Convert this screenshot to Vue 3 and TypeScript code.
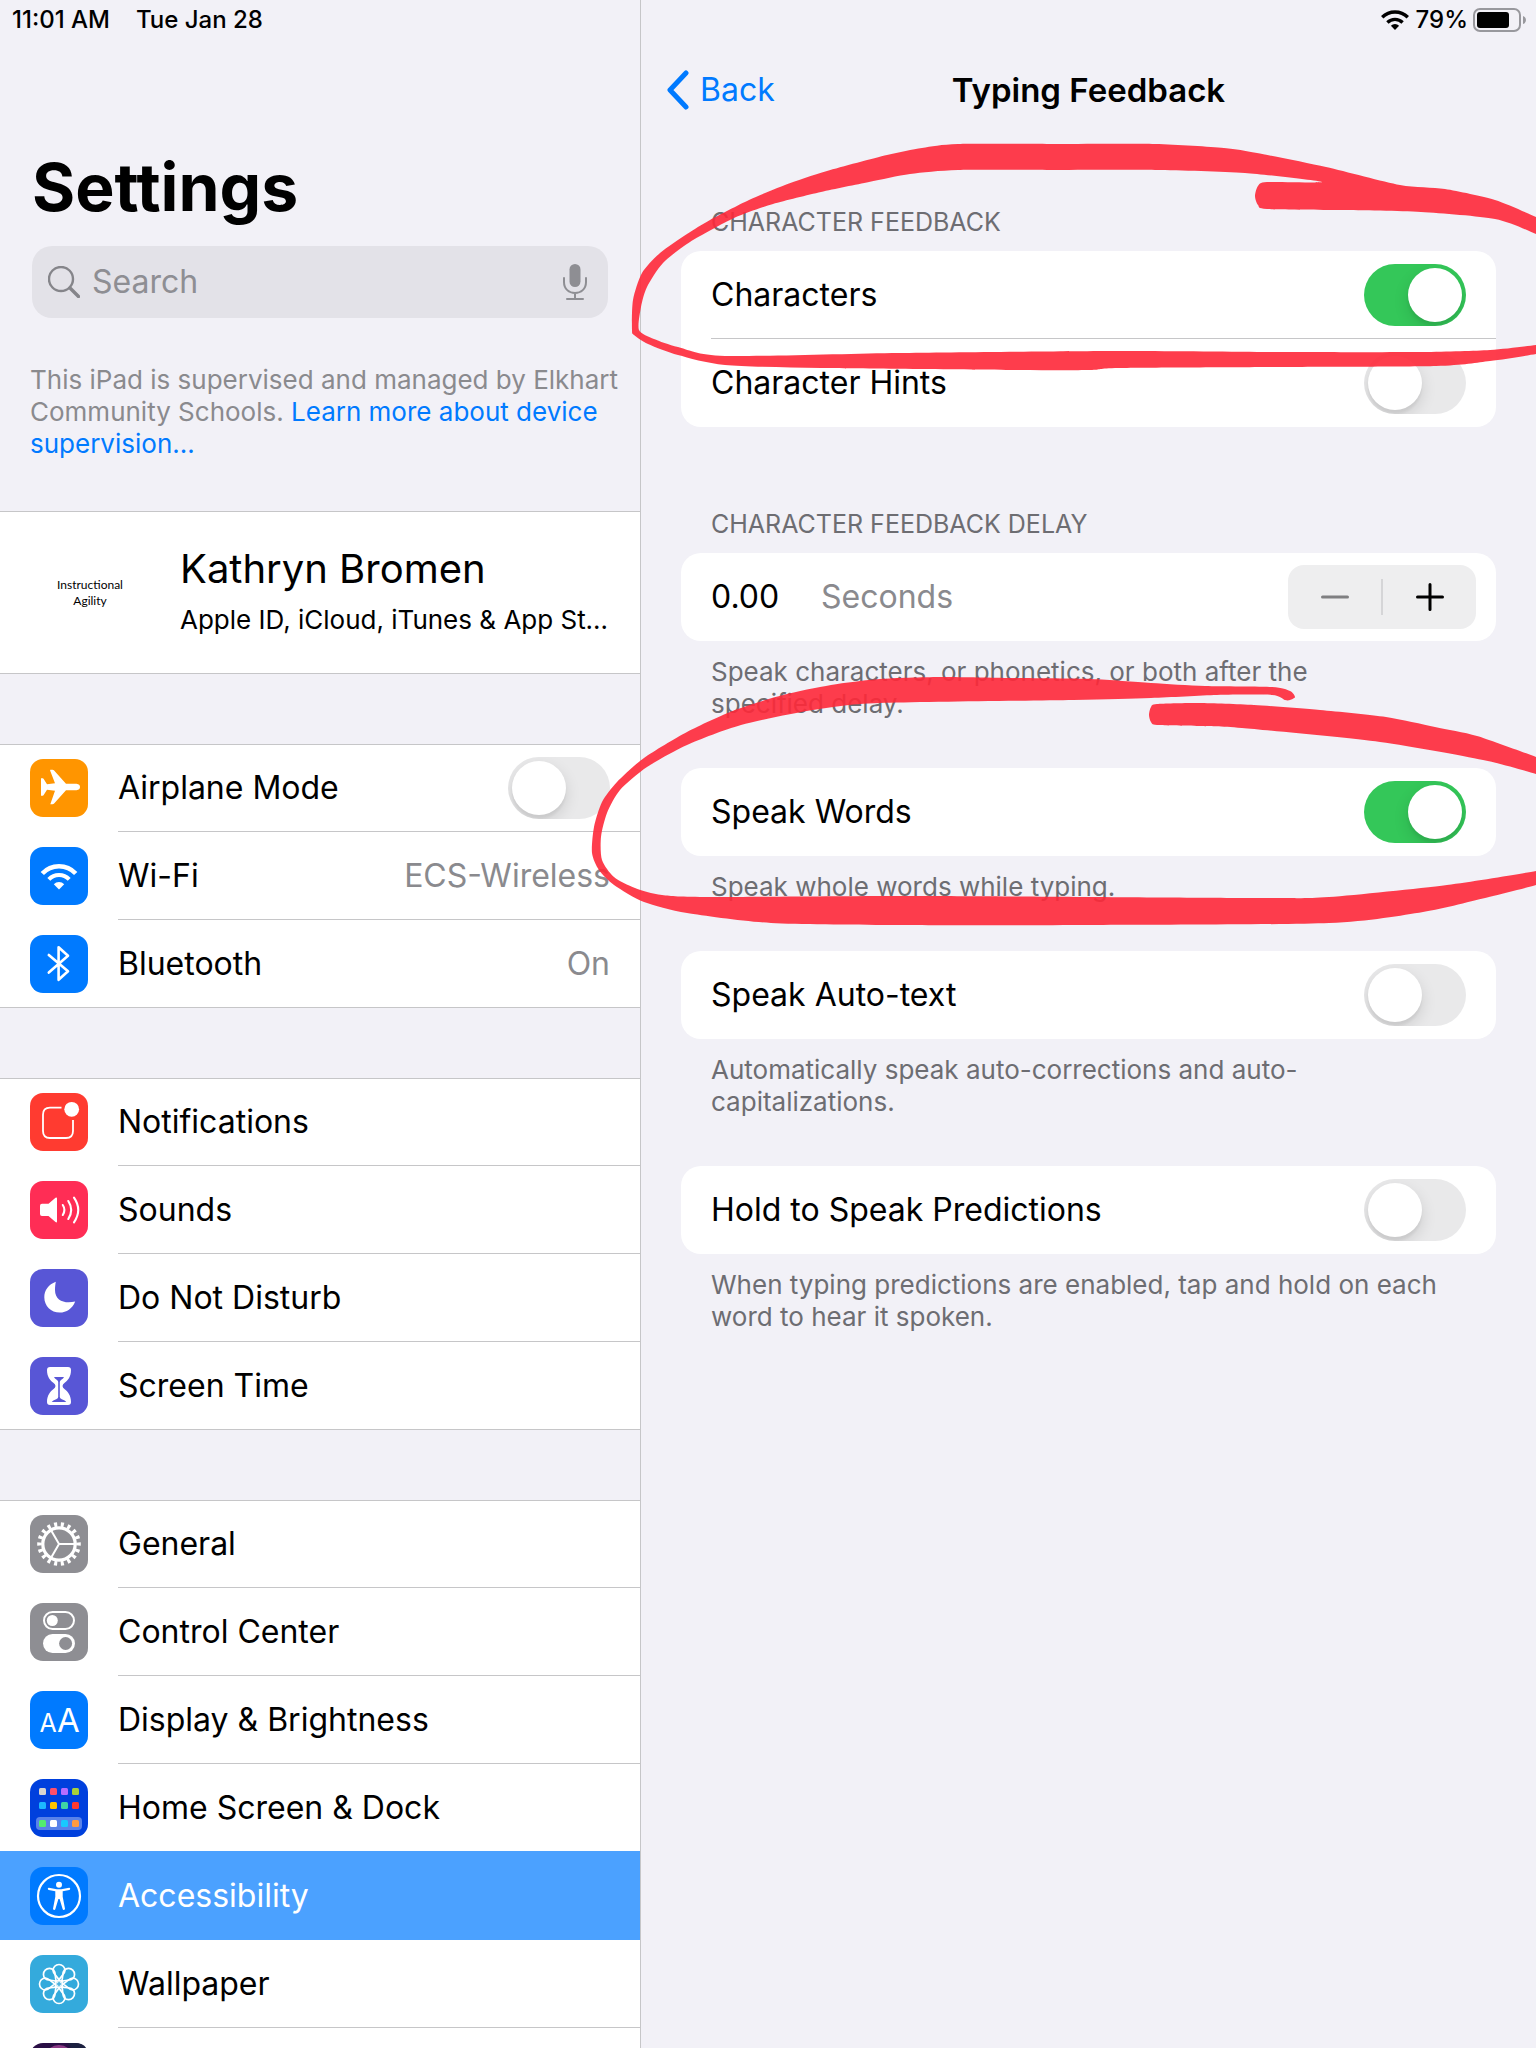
<script setup lang="ts">
import { reactive, ref, computed } from 'vue'

type IconName =
  | 'airplane' | 'wifi' | 'bluetooth' | 'notifications' | 'sounds' | 'moon' | 'hourglass'
  | 'gear' | 'control' | 'display' | 'home' | 'accessibility' | 'wallpaper' | 'siri'

interface Row {
  id: IconName
  label: string
  color: string
  value?: string
  toggle?: boolean
}

const groups: Row[][] = [
  [
    { id: 'airplane', label: 'Airplane Mode', color: '#ff9500', toggle: true },
    { id: 'wifi', label: 'Wi-Fi', color: '#007aff', value: 'ECS-Wireless' },
    { id: 'bluetooth', label: 'Bluetooth', color: '#007aff', value: 'On' },
  ],
  [
    { id: 'notifications', label: 'Notifications', color: '#ff3b30' },
    { id: 'sounds', label: 'Sounds', color: '#ff2d55' },
    { id: 'moon', label: 'Do Not Disturb', color: '#5856d6' },
    { id: 'hourglass', label: 'Screen Time', color: '#5856d6' },
  ],
  [
    { id: 'gear', label: 'General', color: '#8e8e93' },
    { id: 'control', label: 'Control Center', color: '#8e8e93' },
    { id: 'display', label: 'Display & Brightness', color: '#007aff' },
    { id: 'home', label: 'Home Screen & Dock', color: '#0040dd' },
    { id: 'accessibility', label: 'Accessibility', color: '#007aff' },
    { id: 'wallpaper', label: 'Wallpaper', color: '#34aadc' },
    { id: 'siri', label: '', color: '#2a0f45' },
  ],
]

const homeTiles = [
  { y: 9, colors: ['#d9d5cf', '#ff4f6b', '#b76dff', '#a9d13a'] },
  { y: 23, colors: ['#1cb8ff', '#ffc400', '#3fd5a5', '#ff3a30'] },
  { y: 41, colors: ['#53ee70', '#ffffff', '#18c9ff', '#ff9b40'] },
]

const selected = ref<IconName>('accessibility')
const airplane = ref(false)
const search = ref('')
const feedback = reactive({ characters: true, hints: false, words: true, autoText: false, hold: false })

const delay = ref('0.00')
const atMinimum = computed(() => Number(delay.value) <= 0)
function step(amount: number) {
  delay.value = Math.max(0, Number(delay.value) + amount).toFixed(2)
}

// Closed smooth outline through a flat list of x, y pairs.
function outline(flat: number[]): string {
  const n = flat.length / 2
  const at = (i: number) => {
    const k = ((i % n) + n) % n
    return [flat[k * 2], flat[k * 2 + 1]]
  }
  let d = `M${flat[0]} ${flat[1]}`
  for (let i = 0; i < n; i++) {
    const [a, b, c, e] = [at(i - 1), at(i), at(i + 1), at(i + 2)]
    d += `C${b[0] + (c[0] - a[0]) / 8} ${b[1] + (c[1] - a[1]) / 8} ${c[0] - (e[0] - b[0]) / 8} ${c[1] - (e[1] - b[1]) / 8} ${c[0]} ${c[1]}`
  }
  return d + 'Z'
}

const inkStrokes = [
  outline([
    958, 144, 1055, 144, 1155, 144, 1224, 148, 1257, 153, 1326, 167, 1400, 185, 1445, 189, 1495, 200, 1536, 217,
    1560, 228, 1560, 246, 1536, 234, 1495, 219, 1421, 212, 1340, 210, 1267, 209, 1258, 205, 1255, 196, 1258, 186,
    1267, 182, 1322, 182, 1245, 173, 1155, 170, 1055, 170, 958, 170, 910, 174, 869, 182, 821, 192, 773, 204,
    734, 218, 690, 242, 663, 263, 647, 287, 641, 307, 639, 330, 654, 339, 678, 347, 725, 356, 899, 353, 1119, 351,
    1275, 352, 1421, 352, 1490, 350, 1536, 345, 1560, 341, 1560, 349, 1536, 354, 1490, 361, 1436, 366, 1275, 367,
    1119, 368, 1090, 370, 1018, 370, 821, 368, 725, 365, 678, 355, 648, 344, 634, 335, 632, 330, 633, 300,
    642, 273, 660, 253, 687, 234, 710, 220, 749, 200, 785, 185, 827, 171, 887, 155, 922, 148,
  ]),
  outline([
    1290, 700, 1295, 697, 1290, 691, 1272, 687, 1205, 686, 1151, 683, 1091, 679, 1012, 678, 940, 677, 880, 679,
    831, 685, 783, 695, 735, 710, 687, 732, 644, 758, 617, 782, 602, 802, 594, 827, 592, 853, 599, 870, 614, 885,
    644, 902, 687, 913, 771, 923, 892, 925, 1103, 925, 1329, 923, 1423, 912, 1489, 897, 1536, 885, 1560, 877,
    1560, 864, 1536, 871, 1447, 885, 1329, 897, 1254, 898, 922, 896, 711, 897, 662, 895, 635, 888, 614, 877,
    602, 860, 601, 837, 607, 813, 620, 790, 647, 767, 687, 745, 741, 725, 813, 710, 880, 703, 1073, 700,
    1151, 698, 1217, 695, 1272, 695, 1285, 700,
  ]),
  outline([
    1149, 715, 1151, 707, 1157, 704, 1199, 703, 1254, 705, 1320, 710, 1386, 717, 1435, 727, 1477, 736, 1536, 757,
    1560, 767, 1560, 783, 1536, 774, 1483, 760, 1380, 742, 1242, 728, 1199, 726, 1157, 725, 1151, 722,
  ]),
]
</script>

<template>
  <div class="screen">
    <header class="status">
      <div class="status-side">
        <span>11:01 AM</span>
        <span>Tue Jan 28</span>
      </div>
      <div class="status-side status-right">
        <svg class="status-wifi" viewBox="0 0 28 20" aria-hidden="true">
          <g fill="none" stroke="#000" stroke-width="3.4">
            <path d="M1.2 7.2A18.3 18.3 0 0 1 26.8 7.2" />
            <path d="M6.4 12.4A11 11 0 0 1 21.6 12.4" />
          </g>
          <path d="M9.9 15.8a5.8 5.8 0 0 1 8.2 0L14 20z" />
        </svg>
        <span>79%</span>
        <svg class="battery" viewBox="0 0 54 24" aria-hidden="true">
          <rect x="1" y="1" width="46" height="22" rx="6" fill="none" stroke="#98989d" stroke-width="2" />
          <rect x="4" y="4" width="32" height="16" rx="3" />
          <path d="M50 8q3 1 3 4t-3 4z" fill="#98989d" />
        </svg>
      </div>
    </header>

    <div class="columns">
      <aside class="sidebar">
        <h1>Settings</h1>
        <div class="search">
          <svg class="search-icon" viewBox="0 0 32 32" fill="none" stroke="#85858a" aria-hidden="true">
            <circle cx="13" cy="13" r="12" stroke-width="2.4" />
            <path d="M22 22l8.500 8.500" stroke-width="3.400" stroke-linecap="round" />
          </svg>
          <input v-model="search" type="text" placeholder="Search" aria-label="Search settings" />
          <button type="button" class="mic" aria-label="Dictate">
            <svg viewBox="0 0 24 36" fill="none" stroke="#8e8e93" stroke-width="2" stroke-linecap="round">
              <rect x="6.500" y="0" width="11" height="23" rx="5.500" fill="#8e8e93" stroke="none" />
              <path d="M1 14v4c0 7 5 11 11 11s11-4 11-11v-4M12 29v6M4 35h16" />
            </svg>
          </button>
        </div>
        <p class="supervised">
          This iPad is supervised and managed by Elkhart Community Schools.
          <a href="#supervision">Learn more about device supervision...</a>
        </p>

        <a class="profile" href="#apple-id">
          <span class="avatar">Instructional<br />Agility</span>
          <span class="profile-text">
            <span class="profile-name">Kathryn Bromen</span>
            <span class="profile-sub">Apple ID, iCloud, iTunes &amp; App Store</span>
          </span>
        </a>

        <nav class="groups" aria-label="Settings">
          <ul v-for="(group, g) in groups" :key="g" class="group">
            <li v-for="row in group" :key="row.id">
              <component
                :is="row.toggle ? 'label' : 'a'"
                class="row"
                :class="{ selected: row.id === selected }"
                :href="row.toggle ? undefined : '#' + row.id"
                @click="row.toggle || (selected = row.id)"
              >
                <svg class="icon" viewBox="0 0 58 58" fill="#fff" aria-hidden="true">
                  <rect width="58" height="58" rx="13" :fill="row.color" />
                  <path
                    v-if="row.id === 'airplane'"
                    d="M20.300 10.700h2.200q1 0 1.600.8L36 24.700h10.500q3.500.6 3.500 3.300t-3.500 3.300H36L24.100 44.500q-.6.8-1.600.8h-2.200L25 31.700l-8-.9-3.300 5.300q-.4.6-1 .6H11V19.300h1.700q.6 0 1 .6L17 25.200l8-.9-4.900-12.800z"
                  />
                  <template v-else-if="row.id === 'wifi'">
                    <g fill="none" stroke="#fff">
                      <path d="M12.300 26.500A22.800 22.800 0 0 1 45.700 26.500" stroke-width="4.500" />
                      <path d="M18.800 32.400A14 14 0 0 1 39.200 32.400" stroke-width="4" />
                    </g>
                    <path d="M23.800 37.200a7.400 7.400 0 0 1 10.400 0L29 42.600z" />
                  </template>
                  <path
                    v-else-if="row.id === 'bluetooth'"
                    d="M18.800 20L38 36.300 28.600 44.800V12.200L38 20.800 18.800 37.600"
                    fill="none" stroke="#fff" stroke-width="2.600" stroke-linejoin="round" stroke-linecap="round"
                  />
                  <template v-else-if="row.id === 'notifications'">
                    <path
                      d="M31.500 14.700H20q-7 0-7 7V38q0 7 7 7h16q7 0 7-7V27"
                      fill="none" stroke="#fff" stroke-width="1.800"
                    />
                    <circle cx="41.700" cy="16.300" r="7.400" />
                  </template>
                  <template v-else-if="row.id === 'sounds'">
                    <path d="M12 22.800h6.500l7-6q1.500-1 1.500.7v22.900q0 1.700-1.500.7l-7-6H12q-2 0-2-2v-8.300q0-2 2-2z" />
                    <path
                      d="M32.800 24q3.200 5 0 10M38.300 20q5.800 9 0 18M44 16.700q8.500 12.300 0 24.600"
                      fill="none" stroke="#fff" stroke-width="2.100" stroke-linecap="round"
                    />
                  </template>
                  <path
                    v-else-if="row.id === 'moon'"
                    d="M25.800 12.800C18.500 15.500 14.300 21.500 14.300 28.300c0 8.700 6.700 15.300 15.500 15.300 6.700 0 12.700-4.100 15.400-11.100C35 35 25 32 25 21c0-3 .4-6 .8-8.200z"
                  />
                  <template v-else-if="row.id === 'hourglass'">
                    <path
                      d="M20 10h18q3 0 3 3c0 7-3.500 10.500-6 12.500q-2.500 1.800-2.500 3.500t2.500 3.500c2.500 2 6 5.500 6 12.500q0 3-3 3H20q-3 0-3-3c0-7 3.500-10.500 6-12.500q2.500-1.800 2.500-3.500T23 25.500C20.500 23.500 17 20 17 13q0-3 3-3z"
                    />
                    <path
                      :fill="row.color"
                      d="M24 20h10q-.5 1.500-3 3-1.200.8-1.200 2v15q0 1.500 2 2.300 3.500 1 4.500 2.700H21.700q1-1.700 4.500-2.700 2-.8 2-2.300V25q0-1.200-1.200-2-2.500-1.500-3-3z"
                    />
                  </template>
                  <g v-else-if="row.id === 'gear'" fill="none" stroke="#fff">
                    <circle cx="29" cy="29" r="16.200" stroke-width="3.200" />
                    <circle
                      cx="29" cy="29" r="19.500" stroke-width="4.600"
                      pathLength="36" stroke-dasharray="0.900 1.100" stroke-dashoffset="0.450"
                    />
                    <path d="M29 29h15M29 29l-7.500-13M29 29l-7.500 13" stroke-width="2" />
                  </g>
                  <template v-else-if="row.id === 'control'">
                    <rect x="14" y="9" width="30" height="17" rx="8.500" fill="none" stroke="#fff" stroke-width="2" />
                    <circle cx="22.300" cy="17.500" r="5.500" />
                    <rect x="13" y="31" width="32" height="19" rx="9.500" />
                    <circle cx="35.600" cy="40.500" r="6.500" :fill="row.color" />
                  </template>
                  <g v-else-if="row.id === 'display'" class="icon-letters">
                    <text x="9.500" y="41" font-size="25">A</text>
                    <text x="27" y="41" font-size="33">A</text>
                  </g>
                  <template v-else-if="row.id === 'home'">
                    <rect x="6" y="38" width="46" height="13" rx="4" fill-opacity="0.350" />
                    <template v-for="tiles in homeTiles" :key="tiles.y">
                      <rect
                        v-for="(color, i) in tiles.colors" :key="color"
                        :x="9 + i * 11" :y="tiles.y" width="7" height="7" rx="1.500" :fill="color"
                      />
                    </template>
                  </template>
                  <template v-else-if="row.id === 'accessibility'">
                    <circle cx="29" cy="29" r="21" fill="none" stroke="#fff" stroke-width="2.200" />
                    <circle cx="29" cy="17.800" r="3" />
                    <path
                      d="M18.800 20.800l8 1.400h4.400l8-1.400q1 .1 1 1t-.9 1.100l-6.600 1.400v5.500l2.300 12q0 1-1 1.200t-1.300-.7L29.600 32h-1.200l-3.100 10.300q-.4.9-1.300.7t-1-1.200l2.300-12v-5.500l-6.600-1.400q-.9-.2-.9-1.100t1-1z"
                    />
                  </template>
                  <g v-else-if="row.id === 'wallpaper'" fill="none" stroke="#fff" stroke-width="1.700">
                    <circle cx="29" cy="29" r="3.500" />
                    <path
                      v-for="k in 8" :key="k"
                      d="M29 25.500C27.500 21 23 19 23 15.500A6 6 0 0 1 35 15.500C35 19 30.500 21 29 25.500z"
                      :transform="`rotate(${k * 45} 29 29)`"
                    />
                  </g>
                  <template v-else>
                    <ellipse cx="29" cy="15" rx="14" ry="13" fill="#8c3a86" />
                    <path d="M38 0h7q13 0 13 13v20z" fill="#1c2140" />
                  </template>
                </svg>
                <span class="row-body">
                  <span class="row-label">{{ row.label }}</span>
                  <span v-if="row.value" class="row-value">{{ row.value }}</span>
                  <input v-if="row.toggle" v-model="airplane" class="switch" type="checkbox" role="switch" />
                </span>
              </component>
            </li>
          </ul>
        </nav>
      </aside>

      <main class="detail">
        <div class="navbar">
          <button type="button" class="back">
            <svg viewBox="0 0 24 40" fill="none" stroke="#007aff" stroke-width="5" stroke-linecap="round" stroke-linejoin="round" aria-hidden="true">
              <path d="M20 3L4 20l16 17" />
            </svg>
            Back
          </button>
          <h2>Typing Feedback</h2>
        </div>

        <section class="block headed">
          <h3>CHARACTER FEEDBACK</h3>
          <div class="card">
            <label class="card-row">
              <span>Characters</span>
              <input v-model="feedback.characters" class="switch" type="checkbox" role="switch" />
            </label>
            <label class="card-row">
              <span>Character Hints</span>
              <input v-model="feedback.hints" class="switch" type="checkbox" role="switch" />
            </label>
          </div>
        </section>

        <section class="block headed second">
          <h3>CHARACTER FEEDBACK DELAY</h3>
          <div class="card">
            <div class="card-row delay">
              <input id="delay" v-model="delay" class="delay-value" type="text" inputmode="decimal" />
              <label class="delay-unit" for="delay">Seconds</label>
              <div class="stepper">
                <button type="button" aria-label="Decrease delay" :disabled="atMinimum" @click="step(-0.1)">
                  <svg viewBox="0 0 28 28" stroke="currentColor" stroke-width="3" stroke-linecap="round" aria-hidden="true">
                    <path d="M1.500 14h25" />
                  </svg>
                </button>
                <span class="stepper-line"></span>
                <button type="button" aria-label="Increase delay" @click="step(0.1)">
                  <svg viewBox="0 0 28 28" stroke="currentColor" stroke-width="3" stroke-linecap="round" aria-hidden="true">
                    <path d="M1.500 14h25M14 1.500v25" />
                  </svg>
                </button>
              </div>
            </div>
          </div>
          <p class="note narrow">Speak characters, or phonetics, or both after the specified delay.</p>
        </section>

        <section class="block">
          <div class="card">
            <label class="card-row">
              <span>Speak Words</span>
              <input v-model="feedback.words" class="switch" type="checkbox" role="switch" />
            </label>
          </div>
          <p class="note">Speak whole words while typing.</p>
        </section>

        <section class="block">
          <div class="card">
            <label class="card-row">
              <span>Speak Auto-text</span>
              <input v-model="feedback.autoText" class="switch" type="checkbox" role="switch" />
            </label>
          </div>
          <p class="note narrow">Automatically speak auto-corrections and auto-capitalizations.</p>
        </section>

        <section class="block">
          <div class="card">
            <label class="card-row">
              <span>Hold to Speak Predictions</span>
              <input v-model="feedback.hold" class="switch" type="checkbox" role="switch" />
            </label>
          </div>
          <p class="note">When typing predictions are enabled, tap and hold on each word to hear it spoken.</p>
        </section>
      </main>
    </div>

    <svg class="ink" viewBox="0 0 1536 2048" aria-hidden="true">
      <path v-for="(d, i) in inkStrokes" :key="i" :d="d" />
    </svg>
  </div>
</template>

<style>
body {
  margin: 0;
  background: #f2f1f7;
}
</style>

<style scoped>
* {
  box-sizing: border-box;
}

.screen {
  position: relative;
  display: flex;
  flex-direction: column;
  height: 100vh;
  overflow: hidden;
  background: #f2f1f7;
  color: #000;
  font-family: Inter, "Liberation Sans", sans-serif;
  font-size: 32px;
  line-height: 40px;
}

h1, h2, h3, p, ul {
  margin: 0;
  padding: 0;
}

ul {
  list-style: none;
}

a {
  color: inherit;
  text-decoration: none;
}

button, input {
  margin: 0;
  padding: 0;
  border: 0;
  background: none;
  color: inherit;
  font: inherit;
}

/* Status bar */
.status {
  display: flex;
  justify-content: space-between;
  height: 40px;
  padding: 0 9px 0 12px;
  font-size: 24px;
  font-weight: 500;
}

.status-side {
  display: flex;
  align-items: center;
  gap: 26px;
}

.status-right {
  gap: 5px;
}

.status-wifi {
  width: 28px;
  height: 20px;
  margin-right: 2px;
}

.battery {
  width: 54px;
  height: 24px;
}

.columns {
  display: grid;
  grid-template-columns: 5fr 7fr;
  flex: 1;
  min-height: 0;
  margin-top: -40px;
}

/* Sidebar */
.sidebar {
  min-width: 0;
  padding-top: 146px;
}

h1 {
  padding-left: 32px;
  font-size: 66px;
  font-weight: 700;
  line-height: 82px;
}

.search {
  display: flex;
  align-items: center;
  gap: 12px;
  height: 72px;
  margin: 18px 32px 0;
  padding: 0 21px 0 16px;
  border-radius: 20px;
  background: #e3e2e8;
}

.search-icon {
  width: 32px;
  height: 32px;
}

.search input {
  flex: 1;
  min-width: 0;
  outline: none;
}

.search input::placeholder {
  color: #8e8e93;
  opacity: 1;
}

.mic {
  display: flex;
}

.mic svg {
  width: 24px;
  height: 36px;
}

.supervised {
  margin: 46px 16px 51px 30px;
  color: #8a8a8e;
  font-size: 26px;
  line-height: 32px;
}

.supervised a {
  color: #007aff;
}

.profile {
  display: flex;
  align-items: center;
  gap: 30px;
  height: 163px;
  padding: 0 24px 0 30px;
  border: solid #c6c6c8;
  border-width: 1px 0;
  background: #fff;
}

.avatar {
  flex: none;
  width: 120px;
  font-family: Lato, "Liberation Sans", sans-serif;
  font-size: 12px;
  line-height: 16px;
  text-align: center;
}

.profile-text {
  display: flex;
  flex-direction: column;
  min-width: 0;
}

.profile-name {
  font-size: 40px;
  line-height: 54px;
}

.profile-sub {
  overflow: hidden;
  font-size: 26px;
  line-height: 48px;
  text-overflow: ellipsis;
  white-space: nowrap;
}

.group {
  margin-top: 70px;
  background: #fff;
}

.group li:first-child .row {
  box-shadow: inset 0 1px #c6c6c8;
}

.group li:last-child .row {
  border-bottom: 1px solid #c6c6c8;
}

.group li:last-child .row-body {
  border-bottom: 0;
}

.row {
  display: flex;
  align-items: center;
  gap: 30px;
  height: 88px;
  padding-left: 30px;
}

.row.selected {
  background: #4ba1ff;
  color: #fff;
}

.row.selected .row-body {
  border-color: #4ba1ff;
}

.group li:has(+ li .selected) .row-body {
  border-color: #4ba1ff;
}

.group li:has(+ li .selected) .row {
  box-shadow: inset 0 -1px #4ba1ff;
}

.icon {
  flex: none;
  width: 58px;
  height: 58px;
}

.icon-letters {
  font-family: Inter, "Liberation Sans", sans-serif;
}

.row-body {
  display: flex;
  flex: 1;
  align-items: center;
  justify-content: space-between;
  align-self: stretch;
  padding-right: 30px;
  border-bottom: 1px solid #c6c6c8;
}

.row-value {
  color: #8a8a8e;
}

.switch {
  flex: none;
  width: 102px;
  height: 62px;
  padding: 4px;
  border-radius: 31px;
  appearance: none;
  background: #e9e9ea;
  overflow: hidden;
}

.switch::before {
  display: block;
  width: 54px;
  height: 54px;
  border-radius: 50%;
  background: #fff;
  box-shadow: 0 6px 16px rgba(0, 0, 0, 0.12), 0 4px 3px rgba(0, 0, 0, 0.05);
  content: "";
}

.switch:checked {
  background: #34c759;
}

.switch:checked::before {
  margin-left: 40px;
}

/* Detail pane */
.detail {
  padding: 0 40px;
  border-left: 1px solid #c6c6c8;
}

.navbar {
  display: grid;
  grid-template-columns: 1fr auto 1fr;
  align-items: center;
  height: 100px;
  margin: 40px -15px 0;
}

.back {
  display: flex;
  align-items: center;
  gap: 10px;
  color: #007aff;
}

.back svg {
  width: 24px;
  height: 40px;
}

h2 {
  font-size: 33px;
  font-weight: 600;
  line-height: 40px;
}

.block {
  margin-top: 48px;
}

.headed {
  margin-top: 66px;
}

.second {
  margin-top: 81px;
}

h3 {
  padding: 0 30px 13px;
  color: #6d6d72;
  font-size: 25px;
  font-weight: 400;
  line-height: 32px;
}

.card {
  border-radius: 20px;
  background: #fff;
}

.card-row {
  display: flex;
  align-items: center;
  justify-content: space-between;
  height: 88px;
  margin-left: 30px;
  padding-right: 30px;
}

.card-row + .card-row {
  box-shadow: 0 -1px #c6c6c8;
}

.delay {
  justify-content: flex-start;
  padding-right: 20px;
}

.delay-value {
  width: 110px;
  outline: none;
}

.delay-unit {
  color: #8a8a8e;
}

.stepper {
  display: flex;
  align-items: center;
  height: 64px;
  margin-left: auto;
  border-radius: 16px;
  background: #eeeeef;
}

.stepper button {
  display: flex;
  align-items: center;
  justify-content: center;
  width: 93px;
  height: 64px;
}

.stepper button:disabled {
  color: #7f7f81;
}

.stepper svg {
  width: 28px;
  height: 28px;
}

.stepper-line {
  width: 2px;
  height: 36px;
  background: #d5d5d7;
}

.note {
  padding: 15px 30px 0;
  color: #6d6d72;
  font-size: 26px;
  line-height: 32px;
}

.narrow {
  max-width: 680px;
}

/* Hand-drawn marker over the page */
.ink {
  position: absolute;
  top: 0;
  left: 0;
  width: 100%;
  fill: #fe2838;
  fill-opacity: 0.9;
  pointer-events: none;
}
</style>
